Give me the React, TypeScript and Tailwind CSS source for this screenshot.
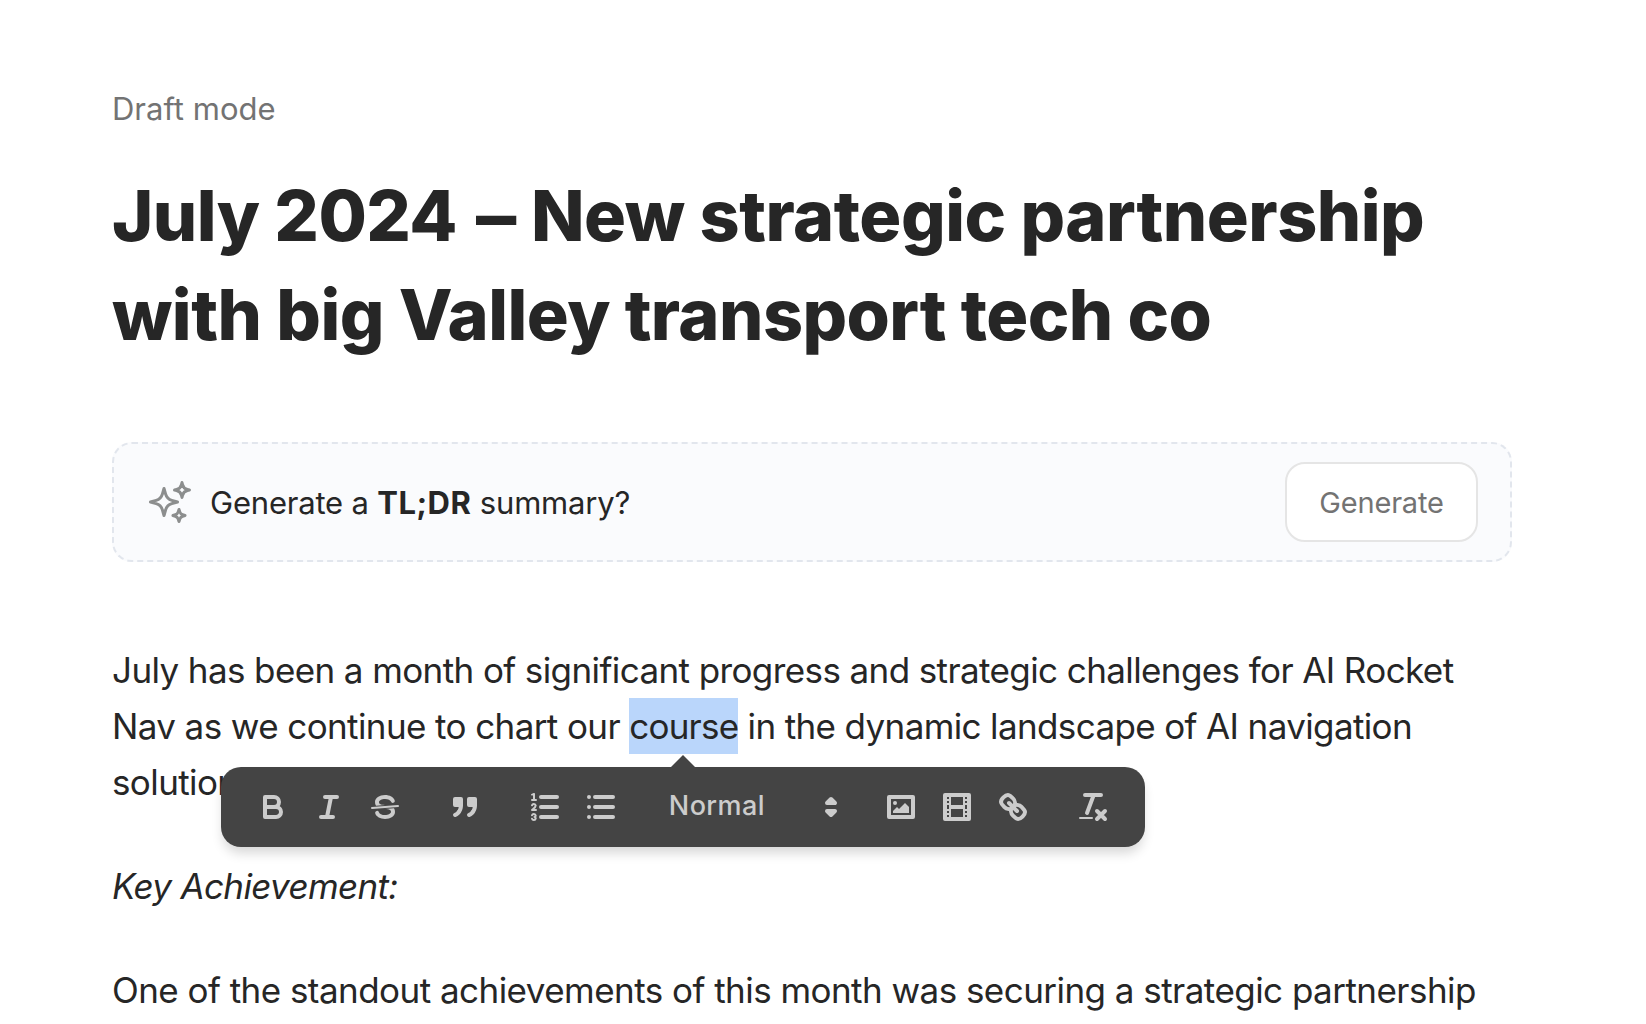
import type { ReactNode } from 'react'

type IconProps = {
  children: ReactNode
}

function Icon({ children }: IconProps) {
  return (
    <svg
      viewBox="0 0 18 18"
      className="h-9 w-9"
      fill="none"
      stroke="currentColor"
      strokeWidth={2}
      strokeLinecap="round"
      strokeLinejoin="round"
    >
      {children}
    </svg>
  )
}

type ToolButtonProps = {
  label: string
  children: ReactNode
}

function ToolButton({ label, children }: ToolButtonProps) {
  return (
    <button type="button" aria-label={label} className="flex h-12 w-14 items-center justify-center">
      <Icon>{children}</Icon>
    </button>
  )
}

function Toolbar() {
  return (
    <div className="absolute left-1/2 top-[69px] z-10 h-20 w-[924px] -translate-x-[calc(50%+1px)] rounded-[20px] bg-[#444] text-[#ccc] tracking-normal shadow-[0_8px_12px_-2px_rgba(0,0,0,0.16)]">
      {/* Arrow pointing at the selection */}
      <div className="absolute -top-3 left-[450px] h-0 w-0 border-x-[12px] border-b-[12px] border-x-transparent border-b-[#444]" />

      <div className="flex h-full items-center gap-6 pl-6">
        <div className="flex">
          <ToolButton label="Bold">
            <path d="M5,4H9.5A2.5,2.5,0,0,1,12,6.5v0A2.5,2.5,0,0,1,9.5,9H5A0,0,0,0,1,5,9V4A0,0,0,0,1,5,4Z" />
            <path d="M5,9h5.5A2.5,2.5,0,0,1,13,11.5v0A2.5,2.5,0,0,1,10.5,14H5a0,0,0,0,1,0,0V9A0,0,0,0,1,5,9Z" />
          </ToolButton>
          <ToolButton label="Italic">
            <path d="M7 4H13M5 14H11M8 14L10 4" />
          </ToolButton>
          <ToolButton label="Strike">
            <path d="M15.5 8.5L2.5 9.5" strokeWidth={1} />
            <g fill="currentColor" stroke="none">
              <path d="M9.007,8C6.542,7.791,6,7.519,6,6.5,6,5.792,7.283,5,9,5c1.571,0,2.765.679,2.969,1.309a1,1,0,0,0,1.9-.617C13.356,4.106,11.354,3,9,3,6.2,3,4,4.538,4,6.5a3.2,3.2,0,0,0,.5,1.843Z" />
              <path d="M8.984,10C11.457,10.208,12,10.479,12,11.5c0,0.708-1.283,1.5-3,1.5-1.571,0-2.765-.679-2.969-1.309a1,1,0,1,0-1.9.617C4.644,13.894,6.646,15,9,15c2.8,0,5-1.538,5-3.5a3.2,3.2,0,0,0-.5-1.843Z" />
            </g>
          </ToolButton>
        </div>

        <div className="flex">
          <ToolButton label="Quote">
            <g fill="currentColor">
              <rect x="4" y="5" width="3" height="3" />
              <rect x="11" y="5" width="3" height="3" />
              <path d="M7,8c0,4.031-3,5-3,5" />
              <path d="M14,8c0,4.031-3,5-3,5" />
            </g>
          </ToolButton>
        </div>

        <div className="flex">
          <ToolButton label="Ordered list">
            <path d="M7 4H15M7 9H15M7 14H15" />
            <g strokeWidth={1}>
              <path d="M2.5 5.5H4.5" />
              <path d="M4.5,10.5h-2c0-.234,1.85-1.076,1.85-2.234A0.959,0.959,0,0,0,2.5,8.156" />
              <path d="M2.5,14.846a0.959,0.959,0,0,0,1.85-.109A0.7,0.7,0,0,0,3.75,14a0.688,0.688,0,0,0,.6-0.736,0.959,0.959,0,0,0-1.85-.109" />
            </g>
            <path
              fill="currentColor"
              stroke="none"
              d="M3.5,6A0.5,0.5,0,0,1,3,5.5V3.085l-0.276.138A0.5,0.5,0,0,1,2.053,3c-0.124-.247-0.023-0.324.224-0.447l1-.5A0.5,0.5,0,0,1,4,2.5v3A0.5,0.5,0,0,1,3.5,6Z"
            />
          </ToolButton>
          <ToolButton label="Bullet list">
            <path d="M6 4H15M6 9H15M6 14H15M3 4H3M3 9H3M3 14H3" />
          </ToolButton>
        </div>

        {/* Block format picker */}
        <button type="button" className="flex h-12 w-[196px] items-center justify-between pl-4">
          <span className="-mt-0.5 font-medium text-[27px] leading-[48px] tracking-[0.4px]">Normal</span>
          <Icon>
            <g fill="currentColor">
              <polygon points="7 11 9 13 11 11 7 11" />
              <polygon points="7 7 9 5 11 7 7 7" />
            </g>
          </Icon>
        </button>

        <div className="flex">
          <ToolButton label="Image">
            <rect x="3" y="4" width="12" height="10" />
            <g fill="currentColor" stroke="none">
              <circle cx="6" cy="7" r="1" />
              <polygon points="5 12 5 11 7 9 8 10 11 7 13 9 13 12 5 12" />
            </g>
          </ToolButton>
          <ToolButton label="Video">
            <rect x="3" y="3" width="12" height="12" />
            <g fill="currentColor" stroke="none">
              <rect x="5" y="3" width="1" height="12" />
              <rect x="12" y="3" width="1" height="12" />
              <rect x="5" y="8" width="8" height="2" />
              <path d="M3 5h3v1H3zM3 7h3v1H3zM3 10h3v1H3zM3 12h3v1H3z" />
              <path d="M12 5h3v1h-3zM12 7h3v1h-3zM12 10h3v1h-3zM12 12h3v1h-3z" />
            </g>
          </ToolButton>
          <ToolButton label="Link">
            <path d="M7 7L11 11" />
            <path d="M8.9,4.577a3.476,3.476,0,0,1,.36,4.679A3.476,3.476,0,0,1,4.577,8.9C3.185,7.5,2.035,6.4,4.217,4.217S7.5,3.185,8.9,4.577Z" />
            <path d="M13.423,9.1a3.476,3.476,0,0,0-4.679-.36,3.476,3.476,0,0,0,.36,4.679c1.392,1.392,2.5,2.542,4.679.36S14.815,10.5,13.423,9.1Z" />
          </ToolButton>
        </div>

        <div className="flex">
          <ToolButton label="Clear formatting">
            <path d="M5 3H13M6 12L9.35 3M11 11L15 15M15 11L11 15" />
            <rect x="2" y="14" width="7" height="1" rx="0.5" fill="currentColor" stroke="none" />
          </ToolButton>
        </div>
      </div>
    </div>
  )
}

function SparklesIcon() {
  return (
    <svg
      viewBox="0 0 24 24"
      className="h-12 w-12 shrink-0 text-[#8c8e8e]"
      fill="none"
      stroke="currentColor"
      strokeWidth={1.5}
      strokeLinecap="round"
      strokeLinejoin="round"
    >
      <path d="M9.813 15.904 9 18.75l-.813-2.846a4.5 4.5 0 0 0-3.09-3.09L2.25 12l2.846-.813a4.5 4.5 0 0 0 3.09-3.09L9 5.25l.813 2.846a4.5 4.5 0 0 0 3.09 3.09L15.75 12l-2.846.813a4.5 4.5 0 0 0-3.09 3.09Z" />
      <path d="M18.259 8.715 18 9.75l-.259-1.035a3.375 3.375 0 0 0-2.455-2.456L14.25 6l1.036-.259a3.375 3.375 0 0 0 2.455-2.456L18 2.25l.259 1.035a3.375 3.375 0 0 0 2.456 2.456L21.75 6l-1.035.259a3.375 3.375 0 0 0-2.456 2.456Z" />
      <path d="M16.894 20.567 16.5 21.75l-.394-1.183a2.25 2.25 0 0 0-1.423-1.423L13.5 18.75l1.183-.394a2.25 2.25 0 0 0 1.423-1.423l.394-1.183.394 1.183a2.25 2.25 0 0 0 1.423 1.423l1.183.394-1.183.394a2.25 2.25 0 0 0-1.423 1.423Z" />
    </svg>
  )
}

function SummaryPrompt() {
  return (
    <div className="mt-[78px] flex h-[120px] items-center rounded-[20px] border-2 border-dashed border-[#e2e6ed] bg-[#fafbfd] px-8">
      <SparklesIcon />
      <p className="ml-4 flex-1 whitespace-nowrap pt-0.5 text-[31px] leading-[44px] tracking-[-0.2px]">
        Generate a <strong className="font-bold tracking-[0.5px]">TL;DR</strong> summary?
      </p>
      <button
        type="button"
        className="h-20 w-[193px] rounded-[20px] border-2 border-[#e5e5e5] bg-white pt-0.5 text-[29px] tracking-[-0.2px] text-[#737373]"
      >
        Generate
      </button>
    </div>
  )
}

export default function App() {
  return (
    <main className="h-[1024px] w-[1646px] overflow-hidden bg-white pl-28 pt-[87px] font-['Inter',sans-serif] text-[#262626]">
      <div className="w-[1400px]">
        <p className="text-[31px] leading-[44px] text-[#737373]">Draft mode</p>

        <h1 className="mt-[35px] whitespace-nowrap text-[70px] font-extrabold leading-[99px] tracking-[-0.54px]">
          July 2024 <span className="ml-1 mr-1.5 inline-block origin-left scale-x-115">–</span>{' '}
          <span className="tracking-[-0.48px]">New strategic partnership</span>
          <br />
          with big Valley transport tech co
        </h1>

        <SummaryPrompt />

        <article className="mt-20 space-y-12 whitespace-nowrap text-[35px] leading-[56px] tracking-[-0.6px]">
          <p>
            July has been a month of significant progress and strategic challenges for AI Rocket
            <br />
            Nav as we continue to chart our{' '}
            <span className="relative inline-block h-14 bg-[#bad6fb] align-top tracking-[-0.78px]">
              course
              <Toolbar />
            </span>{' '}
            <span className="tracking-[-0.63px]">in the dynamic landscape of AI navigation</span>
            <br />
            solutions.
          </p>
          <p className="italic tracking-[-0.65px]">Key Achievement:</p>
          <p className="tracking-[-0.54px]">
            One of the standout achievements of this month was securing a strategic partnership
          </p>
        </article>
      </div>
    </main>
  )
}
